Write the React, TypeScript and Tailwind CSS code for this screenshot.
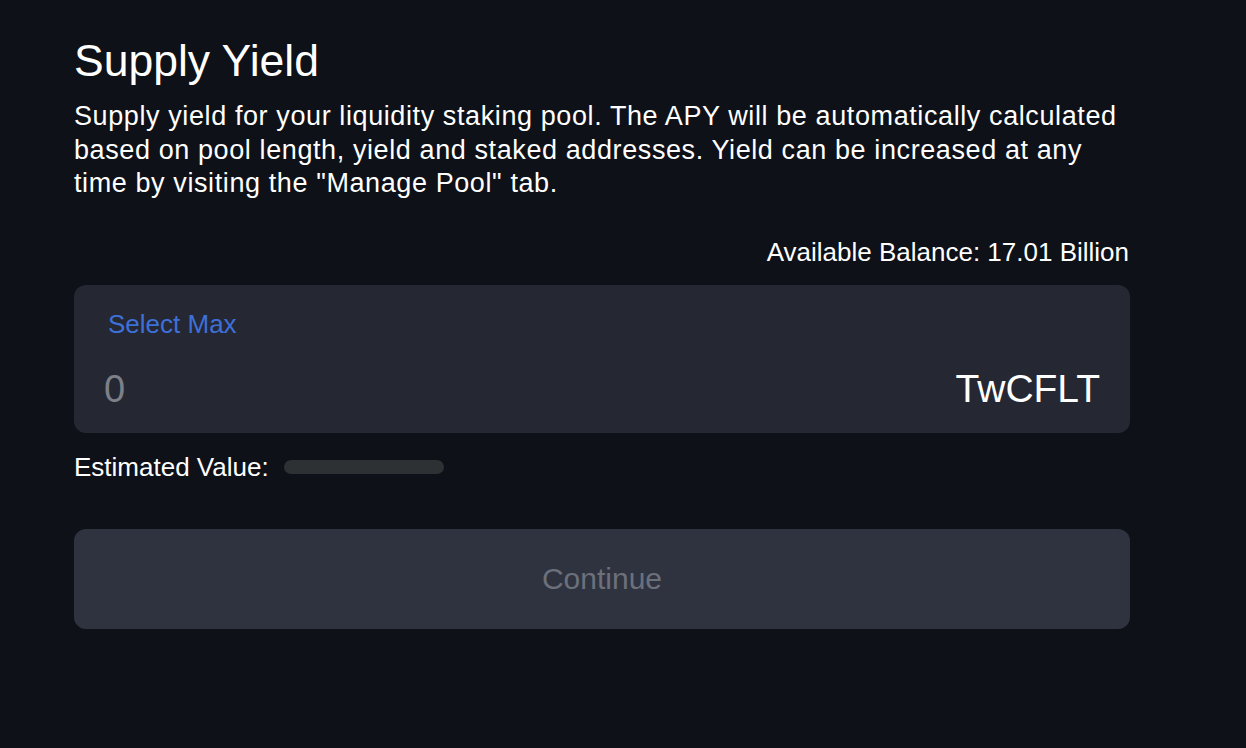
import React from "react";

export default function App() {
  return (
    <div
      className="w-[1246px] h-[748px] bg-[#0e1117] text-white overflow-hidden"
      style={{ fontFamily: '"Liberation Sans", Arial, Helvetica, sans-serif' }}
    >
      <div className="w-[1056px] ml-[74px] pt-[36px] flex flex-col">
        <h1 className="text-[44.5px] leading-[50px] font-normal">Supply Yield</h1>
        <p className="mt-[14px] text-[27px] leading-[33.5px] tracking-[0.6px] text-white whitespace-nowrap">
          Supply yield for your liquidity staking pool. The APY will be automatically calculated
          <br />
          based on pool length, yield and staked addresses. Yield can be increased at any
          <br />
          time by visiting the "Manage Pool" tab.
        </p>
        <div className="mt-[35px] flex justify-end text-[26px] leading-[32px] pr-[1px]">
          Available Balance: 17.01 Billion
        </div>
        <div className="mt-[17px] h-[148px] rounded-[12px] bg-[#252833] flex flex-col px-[30px] pt-[24px]">
          <div className="text-[26px] leading-[30px] text-[#3d70d9] pl-[4px]">Select Max</div>
          <div className="mt-[28px] flex items-center justify-between">
            <span className="text-[38px] leading-[44px] text-[#7d8089]">0</span>
            <span className="text-[39px] leading-[44px] text-white">TwCFLT</span>
          </div>
        </div>
        <div className="mt-[19px] flex items-center gap-[15px]">
          <span className="text-[26px] leading-[30px]">Estimated Value:</span>
          <span className="w-[160px] h-[14px] rounded-full bg-[#2d3134]"></span>
        </div>
        <button className="mt-[47px] h-[100px] rounded-[12px] bg-[#2f3340] text-[30px] text-[#6c707b] flex items-center justify-center">
          Continue
        </button>
      </div>
    </div>
  );
}
